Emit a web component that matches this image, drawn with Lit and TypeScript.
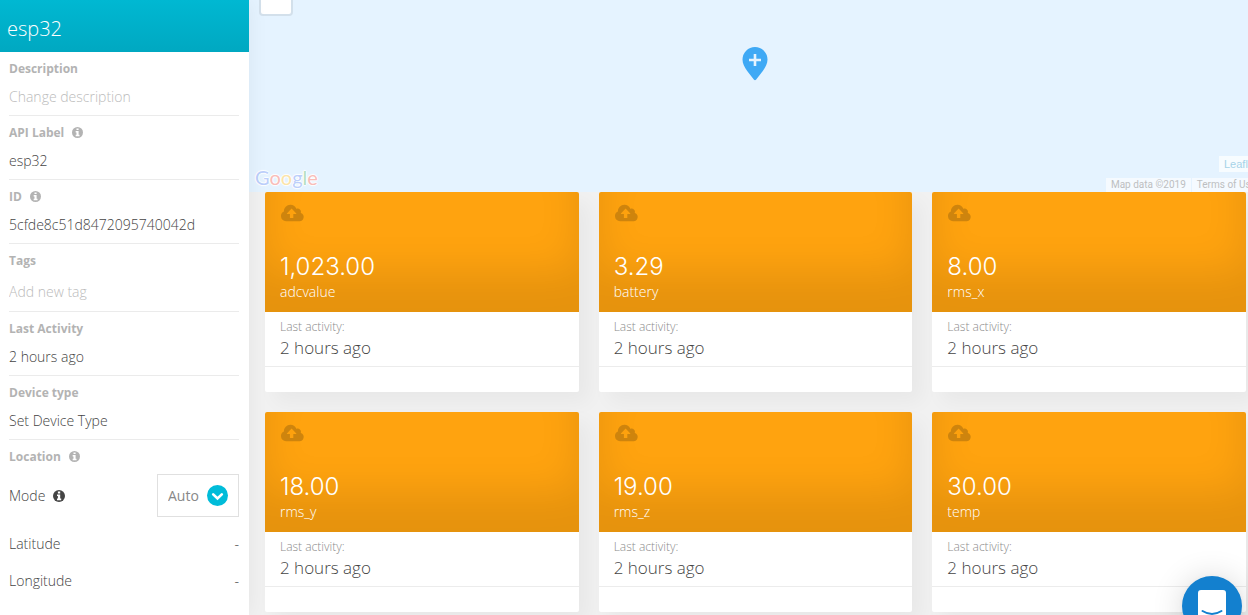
import { LitElement, html, css, svg } from "lit";
import { customElement, property } from "lit/decorators.js";

interface Variable {
  value: string;
  name: string;
}

const VARIABLES: Variable[] = [
  { value: "1,023.00", name: "adcvalue" },
  { value: "3.29", name: "battery" },
  { value: "8.00", name: "rms_x" },
  { value: "18.00", name: "rms_y" },
  { value: "19.00", name: "rms_z" },
  { value: "30.00", name: "temp" },
];

const infoIcon = html`<svg class="info" viewBox="0 0 12 12" aria-hidden="true">
  <circle cx="6" cy="6" r="6" fill="currentColor"></circle>
  ${svg`<path d="M4.900 1.600h2.300v1.800H4.900zM4 4.400H7.200v4H8.200V10.200H4V8.400h.9V6.100H4z" fill="#fff"></path>`}
</svg>`;

@customElement("variable-card")
export class VariableCard extends LitElement {
  @property() value = "";
  @property() name = "";

  static styles = css`
    :host {
      display: block;
      background: #fff;
      border-radius: 2px;
      box-shadow: 10px 10px 20px rgba(0, 0, 0, 0.04);
    }
    .head {
      display: flex;
      flex-direction: column;
      justify-content: space-between;
      box-sizing: border-box;
      height: 120px;
      padding: 12px 15px 10px;
      border-radius: 2px 2px 0 0;
      color: #fff;
      background: #ffa30f;
      box-shadow: inset 0 -40px 40px rgba(0, 0, 0, 0.1);
    }
    .cloud {
      width: 24px;
      height: 18px;
      fill: #ce840d;
    }
    .value {
      font: 300 24px/30px Inter, "Open Sans", sans-serif;
    }
    .name {
      font-size: 14px;
      line-height: 20px;
    }
    .activity {
      padding: 6px 15px;
      border-bottom: 1px solid #ececec;
    }
    .caption {
      color: #8c8c8c;
      font-size: 12px;
      line-height: 18px;
    }
    .when {
      color: #444;
      font-size: 17px;
      line-height: 24px;
    }
    .foot {
      height: 25px;
    }
  `;

  render() {
    return html`
      <div class="head">
        <svg class="cloud" viewBox="0 0 24 18" aria-hidden="true">
          <path
            fill-rule="evenodd"
            d="M6 17.200A5 5 0 0 1 1 12.200 5 5 0 0 1 3.900 7.500 6.500 6.500 0 0 1 10.300 .8a6.500 6.500 0 0 1 6 4 3.300 3.300 0 0 1 4.400 4.200A4.200 4.200 0 0 1 19.300 17.200zM11.600 4.600 6.900 9.400v.7h3V14h3.400v-3.900h3v-.7z"
          ></path>
        </svg>
        <div>
          <div class="value">${this.value}</div>
          <div class="name">${this.name}</div>
        </div>
      </div>
      <div class="activity">
        <div class="caption">Last activity:</div>
        <div class="when">2 hours ago</div>
      </div>
      <div class="foot"></div>
    `;
  }
}

@customElement("device-map")
export class DeviceMap extends LitElement {
  static styles = css`
    :host {
      position: relative;
      display: flex;
      flex-direction: column;
      justify-content: flex-end;
      height: 192px;
      width: calc(100% + 13px);
      background: #e5f3ff;
    }
    .control {
      position: absolute;
      top: 0;
      left: 10px;
      width: 34px;
      height: 16px;
      padding: 0;
      background: #fff;
      background-clip: padding-box;
      border: 2px solid rgba(0, 0, 0, 0.08);
      border-top: 0;
      border-radius: 0 0 4px 4px;
    }
    .pin {
      position: absolute;
      top: 47px;
      left: 50%;
      width: 26px;
      height: 34px;
      margin-left: -13px;
    }
    .leaflet {
      align-self: flex-end;
      padding: 0 4px 0 5px;
      color: #a6d3e8;
      background: rgba(255, 255, 255, 0.7);
      font: 11px/16px "Liberation Sans", Arial, sans-serif;
      text-decoration: none;
    }
    .bottom {
      display: flex;
      justify-content: space-between;
      align-items: flex-end;
      height: 20px;
    }
    .logo {
      margin-left: 6px;
      font: 20px/30px Lato, sans-serif;
      text-shadow: 1px 0 1px #fff, -1px 0 1px #fff, 0 1px 1px #fff, 0 -1px 1px #fff;
    }
    .blue { color: #bccffb; }
    .red { color: #f8bcb8; }
    .yellow { color: #fbe4a8; }
    .green { color: #b5dfc0; }
    .legal {
      display: flex;
      gap: 1px;
      color: #bdbfc1;
      font: 10px/14px Roboto, sans-serif;
    }
    .legal > * {
      padding: 0 5px;
      color: inherit;
      background: rgba(255, 255, 255, 0.6);
      text-decoration: none;
    }
  `;

  render() {
    return html`
      <button class="control" aria-label="Map control"></button>
      <svg class="pin" viewBox="0 0 26 34" role="img" aria-label="Device location">
        <path
          fill="#3fa9f5"
          d="M13 0a12.500 12.500 0 0 1 12.500 12.500c0 4-2 7.500-4.500 11.200L14.200 32.600q-1.200 1.400-2.400 0L5 23.700C2.500 20 .5 16.500 .5 12.500A12.500 12.500 0 0 1 13 0z"
        ></path>
        <path d="M13 7v12M7 13h12" stroke="#e5f3ff" stroke-width="2.600"></path>
      </svg>
      <a class="leaflet" href="#leaflet">Leaflet</a>
      <div class="bottom">
        <div class="logo"><span class="blue">G</span><span class="red">o</span><span class="yellow">o</span><span class="blue">g</span><span class="green">l</span><span class="red">e</span></div>
        <div class="legal">
          <span>Map data ©2019</span>
          <a href="#terms">Terms of Use</a>
        </div>
      </div>
    `;
  }
}

@customElement("app-root")
export class AppRoot extends LitElement {
  static styles = css`
    :host {
      display: flex;
      min-height: 100vh;
      font-family: "Open Sans", sans-serif;
      font-weight: 300;
      font-size: 14px;
      color: #444;
      background: #f1f1f1;
      overflow: hidden;
    }
    .sidebar {
      position: relative;
      z-index: 1;
      flex: 0 0 249px;
      background: #fff;
      box-shadow: 0 0 20px rgba(0, 0, 0, 0.06);
    }
    .title {
      margin: 0;
      padding: 14px 7px 8px;
      color: #fff;
      background: linear-gradient(#00b8d2, #00a8c1);
      font-size: 20px;
      line-height: 30px;
      font-weight: 300;
    }
    .section {
      margin: 0 10px 0 9px;
      padding: 8px 0;
      border-bottom: 1px solid #ebebeb;
    }
    .section:last-child {
      border-bottom: 0;
    }
    .label {
      display: flex;
      align-items: center;
      gap: 8px;
      color: #b3b3b3;
      font-size: 12px;
      line-height: 18px;
      font-weight: 700;
    }
    .info {
      width: 11px;
      height: 11px;
      padding-bottom: 1px;
    }
    .field {
      display: block;
      box-sizing: border-box;
      width: 100%;
      height: 20px;
      margin: 9px 0 0;
      padding: 0;
      border: 0;
      outline: 0;
      color: inherit;
      background: none;
      font: inherit;
      line-height: 20px;
      text-align: left;
    }
    .field.tall {
      height: 24px;
    }
    .field::placeholder {
      color: #bbb;
      opacity: 1;
    }
    .row {
      display: flex;
      justify-content: space-between;
      align-items: center;
      height: 37px;
    }
    .row.mode {
      height: 43px;
      margin: 8px 0;
    }
    .mode-label {
      display: flex;
      align-items: center;
      gap: 8px;
    }
    .mode-label .info {
      width: 12px;
      height: 12px;
      padding: 0;
    }
    .picker {
      position: relative;
    }
    .picker select {
      appearance: none;
      box-sizing: border-box;
      width: 82px;
      height: 43px;
      padding: 0 36px 0 10px;
      border: 1px solid #e0e0e0;
      border-radius: 0;
      color: #888;
      background: #fff;
      font: inherit;
      font-weight: 400;
    }
    .picker svg {
      position: absolute;
      top: 11px;
      right: 11px;
      width: 21px;
      height: 21px;
      pointer-events: none;
    }
    .main {
      flex: 1;
      min-width: 0;
    }
    .cards {
      display: grid;
      grid-template-columns: repeat(3, 1fr);
      gap: 20px;
      padding: 0 2px 0 16px;
    }
    .chat {
      position: fixed;
      right: 6px;
      bottom: -21px;
      z-index: 2;
      width: 60px;
      height: 60px;
      padding: 0;
      border: 0;
      border-radius: 50%;
      background: #1380cf;
      box-shadow: 0 2px 32px rgba(0, 0, 0, 0.16), 0 1px 6px rgba(0, 0, 0, 0.06);
    }
    .chat svg {
      display: block;
      width: 28px;
      height: 32px;
      margin: 0 auto;
    }
  `;

  render() {
    return html`
      <aside class="sidebar">
        <h1 class="title">esp32</h1>
        <div class="section">
          <label class="label" for="description">Description</label>
          <input class="field" id="description" placeholder="Change description" />
        </div>
        <div class="section">
          <label class="label" for="api">API Label ${infoIcon}</label>
          <input class="field" id="api" value="esp32" />
        </div>
        <div class="section">
          <div class="label">ID ${infoIcon}</div>
          <div class="field">5cfde8c51d8472095740042d</div>
        </div>
        <div class="section">
          <label class="label" for="tags">Tags</label>
          <input class="field tall" id="tags" placeholder="Add new tag" />
        </div>
        <div class="section">
          <div class="label">Last Activity</div>
          <div class="field">2 hours ago</div>
        </div>
        <div class="section">
          <div class="label">Device type</div>
          <button class="field">Set Device Type</button>
        </div>
        <div class="section">
          <div class="label">Location ${infoIcon}</div>
          <div class="row mode">
            <label class="mode-label" for="mode">Mode ${infoIcon}</label>
            <div class="picker">
              <select id="mode">
                <option>Auto</option>
                <option>Manual</option>
              </select>
              <svg viewBox="0 0 22 22" aria-hidden="true">
                <circle cx="11" cy="11" r="11" fill="#00bcd9"></circle>
                <path d="M6.500 9.800 11 14l4.500-4.200" fill="none" stroke="#fff" stroke-width="2.800" stroke-linecap="round"></path>
              </svg>
            </div>
          </div>
          <div class="row"><span>Latitude</span><span>-</span></div>
          <div class="row"><span>Longitude</span><span>-</span></div>
        </div>
      </aside>
      <main class="main">
        <device-map></device-map>
        <div class="cards">
          ${VARIABLES.map((v) => html`<variable-card .value=${v.value} .name=${v.name}></variable-card>`)}
        </div>
      </main>
      <button class="chat" aria-label="Open chat">
        <svg viewBox="0 0 28 32" aria-hidden="true">
          <path fill="#fff" d="M3 0h22a3 3 0 0 1 3 3v29l-5-2H3a3 3 0 0 1-3-3V3a3 3 0 0 1 3-3z"></path>
          <path d="M4.500 21q9.500 6 19 0" fill="none" stroke="#1380cf" stroke-width="2" stroke-linecap="round"></path>
        </svg>
      </button>
    `;
  }
}
